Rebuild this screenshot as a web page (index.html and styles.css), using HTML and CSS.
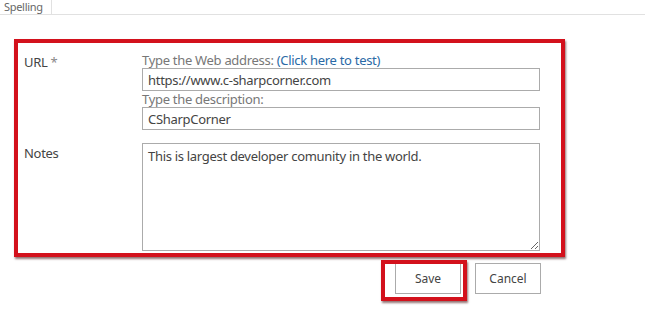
FILE: index.html
```html
<!DOCTYPE html>
<html lang="en">
<head>
    <meta charset="UTF-8">
    <title>Edit Link</title>
    <link rel="stylesheet" href="styles.css">
</head>
<body>

    <div class="ribbon">
        <span class="ribbon-tab">Spelling</span>
    </div>

    <div class="form-box">
        <div class="form-row">
            <div class="form-label">URL <span class="required">*</span></div>
            <div class="form-field">
                <div class="hint">Type the Web address: <a href="#" class="test-link">(Click here to test)</a></div>
                <input type="text" class="text-input" value="https://www.c-sharpcorner.com">
                <div class="hint">Type the description:</div>
                <input type="text" class="text-input" value="CSharpCorner">
            </div>
        </div>
        <div class="form-row notes-row">
            <div class="form-label">Notes</div>
            <div class="form-field">
                <textarea class="notes-input">This is largest developer comunity in the world.</textarea>
            </div>
        </div>
    </div>

    <div class="buttons">
        <span class="save-mark">
            <button type="button" class="form-button">Save</button>
        </span>
        <button type="button" class="form-button">Cancel</button>
    </div>

</body>
</html>
```

FILE: styles.css
```css
    body {
        font-family: "Noto Sans", "Open Sans", sans-serif;
        font-size: 13px;
        letter-spacing: -0.3px;
        color: #444;
        background-color: #fff;
        margin: 0;
        padding: 0;
        width: 645px;
        height: 309px;
        overflow: hidden;
    }
    .ribbon {
        height: 14px;
        border-bottom: 1px solid #e1e1e1;
        display: flex;
    }
    .ribbon-tab {
        width: 47px;
        padding-left: 4px;
        border-right: 1px solid #e1e1e1;
        font-size: 11px;
        line-height: 13px;
        color: #666;
    }
    .form-box {
        margin: 24px 0 0 14px;
        padding: 10px 20px 2px 6px;
        border: 4px solid #d3111c;
        box-sizing: border-box;
        width: 551px;
        box-shadow: 1px 2px 2px rgba(60, 0, 0, 0.55);
    }
    .form-row {
        display: flex;
    }
    .notes-row {
        margin-top: 12px;
    }
    .form-label {
        width: 118px;
        line-height: 16px;
        padding-top: 1px;
    }
    .notes-row .form-label {
        padding-top: 2px;
    }
    .required {
        color: #888;
    }
    .form-field {
        width: 398px;
        display: flex;
        flex-direction: column;
    }
    .hint {
        color: #777;
        line-height: 15px;
        height: 15px;
    }
    .test-link {
        color: #2a6aa6;
        text-decoration: none;
    }
    .text-input {
        height: 23px;
        margin: 0 0 1px 0;
        padding: 0 5px;
        border: 1px solid #ababab;
        box-sizing: border-box;
        font-family: inherit;
        font-size: 13px;
        letter-spacing: -0.3px;
        color: #444;
        outline: none;
    }
    .notes-input {
        height: 108px;
        padding: 3px 5px;
        border: 1px solid #ababab;
        box-sizing: border-box;
        font-family: inherit;
        font-size: 13px;
        letter-spacing: -0.3px;
        color: #444;
        resize: vertical;
        outline: none;
    }
    .buttons {
        display: flex;
        justify-content: flex-end;
        gap: 14px;
        width: 541px;
        margin-top: 6px;
    }
    .form-button {
        width: 66px;
        height: 31px;
        background-color: #fff;
        border: 1px solid #ababab;
        font-family: inherit;
        font-size: 12px;
        color: #444;
        padding: 0;
    }

    /* red marker drawn round the Save button */
    .save-mark {
        position: relative;
        display: flex;
    }
    .save-mark::after {
        content: "";
        position: absolute;
        left: -14px;
        top: -3px;
        right: -6px;
        bottom: -7px;
        border: 4px solid #d3111c;
        box-shadow: 1px 2px 2px rgba(60, 0, 0, 0.55);
    }
```
